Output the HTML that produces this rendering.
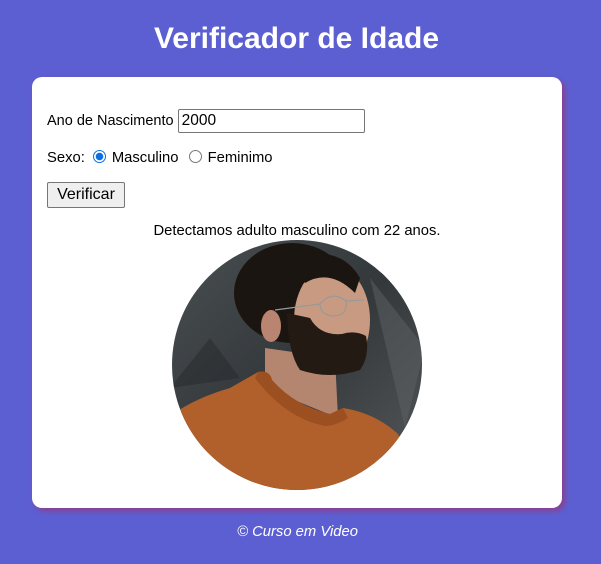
<!DOCTYPE html>
<html><head><meta charset="utf-8"><style>
html,body{margin:0;padding:0;}
body{width:601px;height:564px;background:#5c5fd2;font-family:"Liberation Sans",Arial,sans-serif;position:relative;overflow:hidden;}
h1{position:absolute;top:22px;left:0;width:593px;text-align:center;margin:0;color:#fff;font-size:30px;font-weight:bold;}
.card{position:absolute;left:32px;top:77px;width:530px;height:431px;background:#fff;border-radius:10px;box-shadow:3px 3px 6px #8b3f8e;font-size:14.8px;color:#000;}
.row1{position:absolute;left:15px;top:32px;font-size:14.5px;}
.inp{display:inline-block;vertical-align:middle;width:187px;height:24px;border:1px solid #767676;border-radius:2px;box-sizing:border-box;font-size:15.5px;line-height:22px;padding-left:3px;margin-left:0px;}
.row2{position:absolute;left:15px;top:73px;}
.radio{display:inline-block;width:13px;height:13px;border-radius:50%;border:1px solid #777;vertical-align:-1px;margin:0 6px 0 8px;box-sizing:border-box;}
.radio.on{border:1.5px solid #0a6fe5;background:radial-gradient(circle,#0a6fe5 3.5px,#fff 4px);}
.btn{position:absolute;left:15px;top:105px;width:78px;height:26px;border:1px solid #767676;background:#efefef;border-radius:2px;box-sizing:border-box;font-size:16px;text-align:center;line-height:24px;}
.res{position:absolute;left:0;width:530px;top:146px;text-align:center;}
svg{position:absolute;left:138px;top:161px;}
.foot{position:absolute;top:524px;left:0;width:595px;text-align:center;color:#fff;font-style:italic;font-size:14.8px;}
</style></head><body>
<h1>Verificador de Idade</h1>
<div class="card">
<div class="row1">Ano de Nascimento <span class="inp">2000</span></div>
<div class="row2">Sexo:<span class="radio on"></span>Masculino <span class="radio" style="margin-left:6px"></span>Feminimo</div>
<div class="btn">Verificar</div>
<div class="res">Detectamos adulto masculino com 22 anos.</div>
<svg width="255" height="255" viewBox="0 0 255 255">
<defs><clipPath id="c"><circle cx="127" cy="127" r="125"/></clipPath>
<linearGradient id="r" x1="0" y1="0" x2="1" y2="1"><stop offset="0" stop-color="#4a4f52"/><stop offset=".5" stop-color="#33383b"/><stop offset="1" stop-color="#56595b"/></linearGradient></defs>
<g clip-path="url(#c)">
<rect width="255" height="255" fill="url(#r)"/>
<path d="M0 150 L40 100 L70 140 Z" fill="#2a2d30" opacity=".6"/>
<path d="M200 40 L255 110 L235 190 Z" fill="#5e6264" opacity=".5"/>
<ellipse cx="122" cy="55" rx="58" ry="50" fill="#1b1511"/>
<polygon points="95,110 165,120 168,180 95,150" fill="#b48670"/>
<ellipse cx="162" cy="82" rx="38" ry="55" fill="#c99a82"/>
<path d="M120 20 Q170 5 190 40 L185 55 Q160 30 135 45 Z" fill="#1b1511"/>
<ellipse cx="101" cy="88" rx="10" ry="16" fill="#b98570"/>
<path d="M117 75 Q118 115 130 132 Q160 142 190 132 Q200 118 196 98 Q185 92 172 96 Q150 98 140 80 Z" fill="#231a13"/>
<path d="M105 72 L150 66 M150 66 Q162 52 176 63 Q178 78 162 78 Q150 76 150 66 M176 63 L194 62" stroke="#999" stroke-width="1.2" fill="none"/>
<path d="M0 178 Q25 160 60 150 L88 134 Q100 132 102 142 Q125 168 160 176 L173 170 Q205 175 228 196 L255 255 L0 255 Z" fill="#b1602b"/>
<path d="M88 134 Q100 132 102 142 Q125 168 160 176 L173 170 L178 180 Q165 188 155 188 Q115 180 85 140 Z" fill="#9c5021"/>
</g></svg>
</div>
<div class="foot">© Curso em Video</div>
</body></html>
